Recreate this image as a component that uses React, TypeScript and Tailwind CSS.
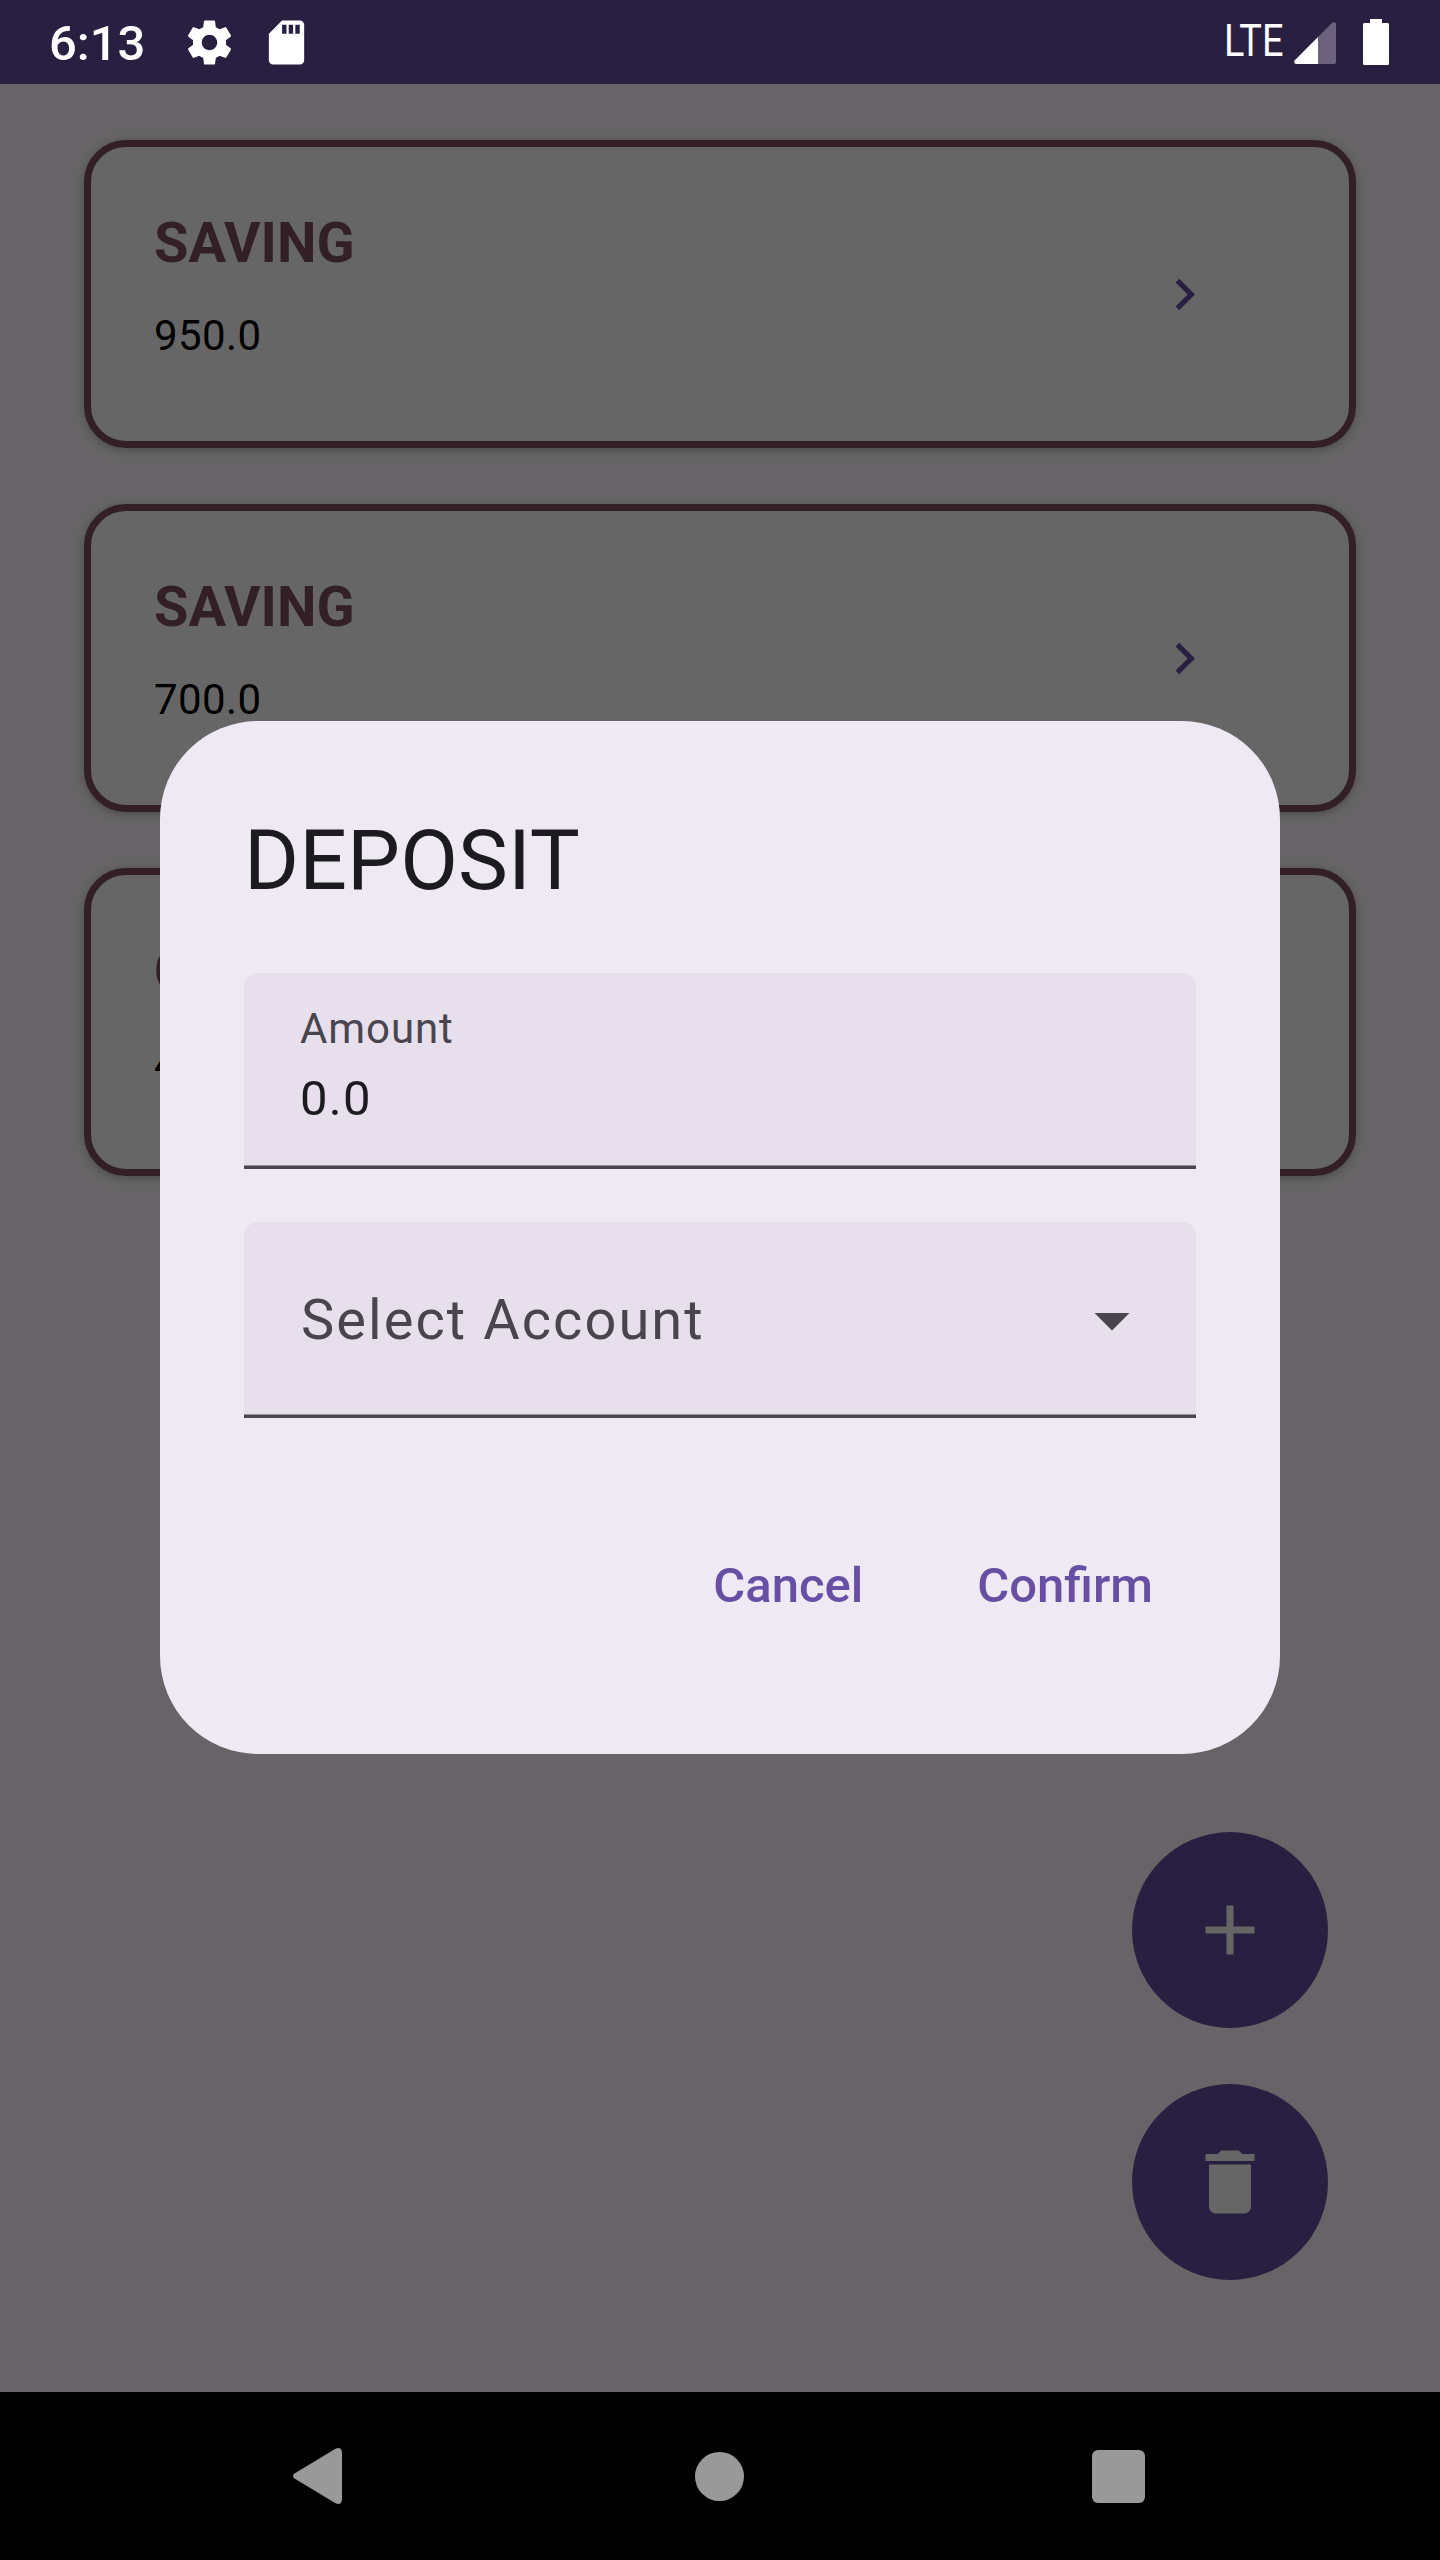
import type { ReactNode } from "react";

type Account = { type: string; balance: string };

const accounts: Account[] = [
  { type: "SAVING", balance: "950.0" },
  { type: "SAVING", balance: "700.0" },
  { type: "CHECKING", balance: "400.0" },
];

function StatusBar() {
  return (
    <header className="relative z-20 flex h-[84px] items-start text-white">
      <span className="ml-[49px] mt-[12px] w-[99px] whitespace-nowrap text-[49px] font-medium leading-[64px]">6:13</span>
      <svg className="ml-[35px] mt-[16px] size-[53px]" viewBox="0 0 24 24" fill="currentColor">
        <path d="M19.43 12.98c.04-.32.07-.64.07-.98s-.03-.66-.07-.98l2.11-1.65c.19-.15.24-.42.12-.64l-2-3.46c-.12-.22-.39-.3-.61-.22l-2.49 1c-.52-.4-1.08-.73-1.69-.98l-.38-2.65C14.46 2.18 14.25 2 14 2h-4c-.25 0-.46.18-.49.42l-.38 2.65c-.61.25-1.17.59-1.69.98l-2.49-1c-.23-.09-.49 0-.61.22l-2 3.46c-.13.22-.07.49.12.64l2.11 1.65c-.04.32-.07.65-.07.98s.03.66.07.98l-2.11 1.65c-.19.15-.24.42-.12.64l2 3.46c.12.22.39.3.61.22l2.49-1c.52.4 1.08.73 1.69.98l.38 2.65c.03.24.24.42.49.42h4c.25 0 .46-.18.49-.42l.38-2.65c.61-.25 1.17-.59 1.69-.98l2.49 1c.23.09.49 0 .61-.22l2-3.46c.12-.22.07-.49-.12-.64l-2.11-1.65zM12 15.5c-1.93 0-3.5-1.57-3.5-3.5s1.57-3.5 3.5-3.5 3.5 1.57 3.5 3.5-1.57 3.5-3.5 3.5z" />
      </svg>
      <svg className="ml-[24px] mt-[16px] size-[53px]" viewBox="0 0 24 24" fill="currentColor">
        <path d="M18 2h-8L4.02 8 4 20c0 1.1.9 2 2 2h12c1.1 0 2-.9 2-2V4c0-1.1-.9-2-2-2zm-6 6h-2V4h2v4zm3 0h-2V4h2v4zm3 0h-2V4h2v4z" />
      </svg>
      <div className="ml-auto flex items-start">
        <span className="mt-[14px] w-[70px] origin-left scale-x-[0.87] whitespace-nowrap text-[43.5px] leading-[56px]">LTE</span>
        <svg className="mt-[22px] h-[42px] w-[42px]" viewBox="0 0 42 42">
          <path d="M24 15 38 1q1.500-1.500 4 0V40q0 2-2 2H24Z" fill="#6c627c" />
          <path d="M24 15V42H2Q-1 41 .8 38.200Z" fill="#fff" />
        </svg>
        <svg className="ml-[27px] mr-[51px] mt-[19px] h-[46px] w-[26px]" viewBox="0 0 26 46">
          <path d="M7 0H19V4H24.500Q26 4 26 5.500V44.500Q26 46 24.500 46H1.500Q0 46 0 44.500V5.500Q0 4 1.500 4H7Z" fill="#fff" />
        </svg>
      </div>
    </header>
  );
}

function AccountCard({ type, balance }: Account) {
  return (
    <article className="flex h-[308px] items-center justify-between rounded-[42px] border-[7px] border-[#7d5260] bg-white pl-[63px] pr-[133px] shadow-[0_2px_10px_rgba(0,0,0,0.28)]">
      <div className="self-start pt-[54px]">
        <h2 className="text-[56px] font-bold leading-[84px] text-[#7d5260]">{type}</h2>
        <p className="mt-[23px] text-[42px] leading-[56px] tracking-[0.4px] text-black">{balance}</p>
      </div>
      <svg className="size-[63px] text-[#6750a4]" viewBox="0 0 24 24" fill="currentColor">
        <path d="M8.590 16.590 13.170 12 8.590 7.410 10 6l6 6-6 6z" />
      </svg>
    </article>
  );
}

function Fab({ label, children }: { label: string; children: ReactNode }) {
  return (
    <button aria-label={label} className="flex size-[196px] items-center justify-center rounded-full bg-[#6750a4] text-white">
      <svg className="size-[84px]" viewBox="0 0 24 24" fill="currentColor">
        {children}
      </svg>
    </button>
  );
}

function DepositDialog() {
  return (
    <section role="dialog" className="flex h-[1033px] w-[1120px] flex-col rounded-[98px] bg-[#efe9f4] px-[84px] pt-[84px]">
      <h1 className="text-[84px] leading-[112px] tracking-[0.1px] text-[#1c1b1f]">DEPOSIT</h1>
      <div className="mt-[56px] h-[196px] rounded-t-[14px] bg-[#e7e0ec] pl-[56px] pt-[28px] shadow-[inset_0_-3.5px_0_#49454f]">
        <div className="text-[42px] leading-[56px] tracking-[0.9px] text-[#49454f]">Amount</div>
        <div className="text-[49px] leading-[84px] tracking-[1.3px] text-[#1c1b1f]">0.0</div>
      </div>
      <div className="mt-[53px] flex h-[196px] items-center justify-between rounded-t-[14px] bg-[#e7e0ec] pl-[57px] pr-[42px] text-[#49454f] shadow-[inset_0_-3.5px_0_#49454f]">
        <span className="text-[56px] leading-[84px] tracking-[2.05px]">Select Account</span>
        <svg className="size-[84px]" viewBox="0 0 24 24" fill="currentColor">
          <path d="M7 10l5 5 5-5z" />
        </svg>
      </div>
      <div className="mt-[98px] flex justify-end gap-[30px] pr-px text-[49px] font-medium text-[#6750a4]">
        <button className="h-[140px] px-[42px] leading-[70px]">Cancel</button>
        <button className="h-[140px] px-[42px] leading-[70px]">Confirm</button>
      </div>
    </section>
  );
}

function NavigationBar() {
  return (
    <nav className="flex h-[168px] items-center bg-black">
      <svg className="ml-[293px] h-[56px] w-[49px]" viewBox="0 0 49 56" fill="#999">
        <path d="M1.500 25.500 42.500.8Q48-1.500 49 4V52Q48 57.500 42.500 55.200L1.500 30.500Q-1.500 28 1.500 25.500Z" />
      </svg>
      <div className="ml-[353px] size-[49px] rounded-full bg-[#999]" />
      <div className="ml-[348px] size-[53px] rounded-[6px] bg-[#999]" />
    </nav>
  );
}

export default function App() {
  return (
    <div className="relative flex h-[2560px] w-[1440px] flex-col overflow-hidden bg-[#fffbfe] font-['Roboto',sans-serif]">
      <div className="absolute inset-x-0 top-0 h-[84px] bg-[#6750a4]" />
      <StatusBar />
      <main className="flex flex-1 flex-col px-[84px] pt-[56px]">
        <div className="flex flex-col gap-[56px]">
          {accounts.map((account, index) => (
            <AccountCard key={index} {...account} />
          ))}
        </div>
        <div className="mb-[112px] mr-[28px] mt-auto flex flex-col items-end gap-[56px]">
          <Fab label="Add">
            <path d="M19 13h-6v6h-2v-6H5v-2h6V5h2v6h6v2z" />
          </Fab>
          <Fab label="Delete">
            <path d="M6 19c0 1.100.9 2 2 2h8c1.100 0 2-.9 2-2V7H6v12zM19 4h-3.500l-1-1h-5l-1 1H5v2h14V4z" />
          </Fab>
        </div>
      </main>
      <NavigationBar />
      <div className="absolute inset-x-0 top-0 z-10 flex h-[2392px] justify-center bg-black/60 pt-[721px]">
        <DepositDialog />
      </div>
    </div>
  );
}
